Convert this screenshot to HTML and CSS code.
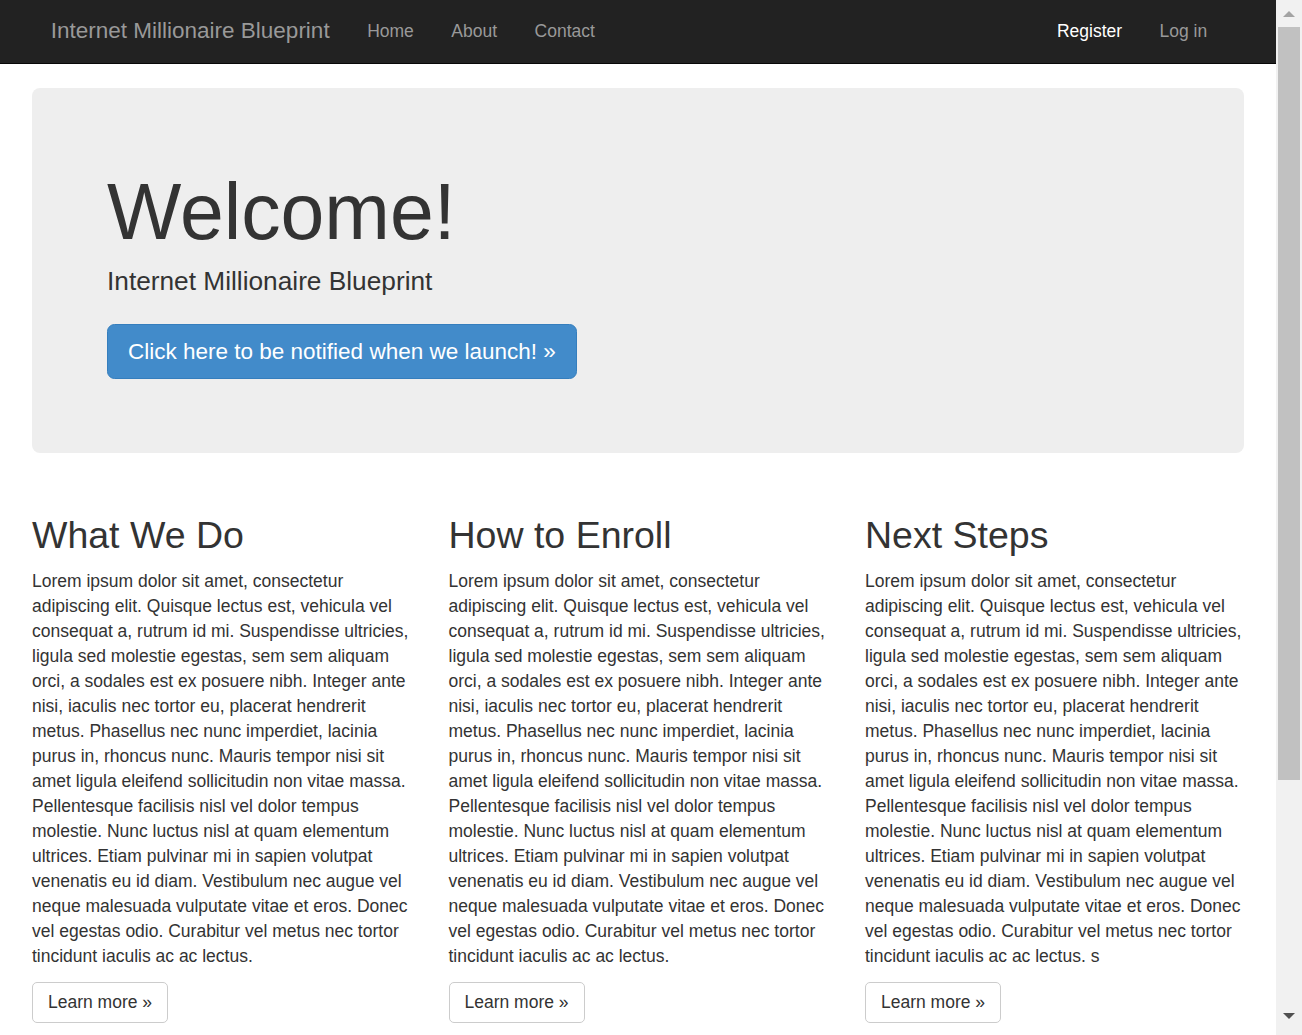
FILE: index.html
```html
<!DOCTYPE html>
<html lang="en">
<head>
<meta charset="utf-8">
<title>Internet Millionaire Blueprint</title>
<link rel="stylesheet" href="styles.css">
</head>
<body>
<div class="page">
  <nav class="navbar">
    <div class="nav-inner">
      <div class="nav-left">
        <a class="brand" href="#">Internet Millionaire Blueprint</a>
        <ul class="nav-links">
          <li><a href="#">Home</a></li>
          <li><a href="#">About</a></li>
          <li><a href="#">Contact</a></li>
        </ul>
      </div>
      <ul class="nav-links nav-right">
        <li><a class="active" href="#">Register</a></li>
        <li><a href="#">Log in</a></li>
      </ul>
    </div>
  </nav>
  <main class="container">
    <section class="jumbotron">
      <h1 class="jumbo-title">Welcome!</h1>
      <p class="jumbo-lead">Internet Millionaire Blueprint</p>
      <div class="jumbo-action">
        <a class="btn-primary" href="#">Click here to be notified when we launch! &raquo;</a>
      </div>
    </section>
    <div class="columns">
      <div class="col">
        <h2 class="col-title">What We Do</h2>
        <p class="col-text">Lorem ipsum dolor sit amet, consectetur adipiscing elit. Quisque lectus est, vehicula vel consequat a, rutrum id mi. Suspendisse ultricies, ligula sed molestie egestas, sem sem aliquam orci, a sodales est ex posuere nibh. Integer ante nisi, iaculis nec tortor eu, placerat hendrerit metus. Phasellus nec nunc imperdiet, lacinia purus in, rhoncus nunc. Mauris tempor nisi sit amet ligula eleifend sollicitudin non vitae massa. Pellentesque facilisis nisl vel dolor tempus molestie. Nunc luctus nisl at quam elementum ultrices. Etiam pulvinar mi in sapien volutpat venenatis eu id diam. Vestibulum nec augue vel neque malesuada vulputate vitae et eros. Donec vel egestas odio. Curabitur vel metus nec tortor tincidunt iaculis ac ac lectus.</p>
        <a class="btn-default" href="#">Learn more &raquo;</a>
      </div>
      <div class="col">
        <h2 class="col-title">How to Enroll</h2>
        <p class="col-text">Lorem ipsum dolor sit amet, consectetur adipiscing elit. Quisque lectus est, vehicula vel consequat a, rutrum id mi. Suspendisse ultricies, ligula sed molestie egestas, sem sem aliquam orci, a sodales est ex posuere nibh. Integer ante nisi, iaculis nec tortor eu, placerat hendrerit metus. Phasellus nec nunc imperdiet, lacinia purus in, rhoncus nunc. Mauris tempor nisi sit amet ligula eleifend sollicitudin non vitae massa. Pellentesque facilisis nisl vel dolor tempus molestie. Nunc luctus nisl at quam elementum ultrices. Etiam pulvinar mi in sapien volutpat venenatis eu id diam. Vestibulum nec augue vel neque malesuada vulputate vitae et eros. Donec vel egestas odio. Curabitur vel metus nec tortor tincidunt iaculis ac ac lectus.</p>
        <a class="btn-default" href="#">Learn more &raquo;</a>
      </div>
      <div class="col">
        <h2 class="col-title">Next Steps</h2>
        <p class="col-text">Lorem ipsum dolor sit amet, consectetur adipiscing elit. Quisque lectus est, vehicula vel consequat a, rutrum id mi. Suspendisse ultricies, ligula sed molestie egestas, sem sem aliquam orci, a sodales est ex posuere nibh. Integer ante nisi, iaculis nec tortor eu, placerat hendrerit metus. Phasellus nec nunc imperdiet, lacinia purus in, rhoncus nunc. Mauris tempor nisi sit amet ligula eleifend sollicitudin non vitae massa. Pellentesque facilisis nisl vel dolor tempus molestie. Nunc luctus nisl at quam elementum ultrices. Etiam pulvinar mi in sapien volutpat venenatis eu id diam. Vestibulum nec augue vel neque malesuada vulputate vitae et eros. Donec vel egestas odio. Curabitur vel metus nec tortor tincidunt iaculis ac ac lectus. s</p>
        <a class="btn-default" href="#">Learn more &raquo;</a>
      </div>
    </div>
  </main>
</div>
<div class="scrollbar" aria-hidden="true">
  <svg class="sb-arrow" width="26" height="27" viewBox="0 0 26 27"><polygon points="7,17 19,17 13,11" fill="#a3a3a3"/></svg>
  <div class="sb-track"><div class="sb-thumb"></div></div>
  <svg class="sb-arrow" width="26" height="27" viewBox="0 0 26 27"><polygon points="7,5 19,5 13,11" fill="#505050"/></svg>
</div>
</body>
</html>
```

FILE: styles.css
```css
* { box-sizing: border-box; }

html, body {
  margin: 0;
  height: 100%;
  overflow: hidden;
}

body {
  display: flex;
  font-family: "Liberation Sans", Arial, Helvetica, sans-serif;
  font-size: 17.5px;
  line-height: 25px;
  color: #333;
  background: #fff;
}

a { text-decoration: none; }

.page {
  flex: 1;
  min-width: 0;
  height: 1035px;
  overflow: hidden;
}

/* navbar */
.navbar {
  height: 64px;
  background: #222;
  border-bottom: 1px solid #080808;
}

.nav-inner {
  display: flex;
  justify-content: space-between;
  padding: 0 32px;
  height: 63px;
}

.nav-left {
  display: flex;
}

.brand {
  display: block;
  font-size: 22.5px;
  line-height: 25px;
  padding: 17.5px 18.75px 0;
  color: #999;
}

.nav-links {
  display: flex;
  list-style: none;
  margin: 0;
  padding: 0;
}

.nav-links a {
  display: block;
  padding: 18.5px 18.75px 0;
  line-height: 25px;
  color: #999;
}

.nav-links a.active {
  color: #fff;
}

.nav-right {
  margin-right: 18px;
}

/* container */
.container {
  padding: 0 32px;
}

.jumbotron {
  margin-top: 24px;
  padding: 60px 75px 74px;
  background: #eee;
  border-radius: 8px;
}

.jumbo-title {
  margin: 21px 0 0;
  font-size: 78.75px;
  line-height: 86.6px;
  font-weight: 500;
  color: #333;
}

.jumbo-lead {
  margin: 7px 0 0;
  font-size: 26.25px;
  line-height: 37.5px;
  font-weight: 200;
}

.jumbo-action {
  display: flex;
  margin-top: 23.5px;
}

.btn-primary {
  display: block;
  padding: 12.5px 20px 10.5px;
  font-size: 22.5px;
  line-height: 30px;
  color: #fff;
  background: #428bca;
  border: 1px solid #357ebd;
  border-radius: 7.5px;
}

.columns {
  display: grid;
  grid-template-columns: repeat(3, 1fr);
  column-gap: 37.5px;
  margin-top: 62px;
}

.col {
  display: flex;
  flex-direction: column;
  align-items: flex-start;
}

.col-title {
  margin: 0 0 13.5px;
  font-size: 37.5px;
  line-height: 41.25px;
  font-weight: 500;
}

.col-text {
  margin: 0 0 12.5px;
}

.btn-default {
  display: block;
  padding: 7px 15px;
  line-height: 25px;
  color: #333;
  background: #fff;
  border: 1px solid #ccc;
  border-radius: 5px;
}

/* fake browser scrollbar */
.scrollbar {
  width: 26px;
  height: 1035px;
  flex: none;
  display: flex;
  flex-direction: column;
  background: #f1f1f1;
}

.sb-arrow {
  display: block;
  flex: none;
}

.sb-track {
  flex: 1;
  padding: 0 2px;
}

.sb-thumb {
  height: 753px;
  background: #c1c1c1;
}
```
